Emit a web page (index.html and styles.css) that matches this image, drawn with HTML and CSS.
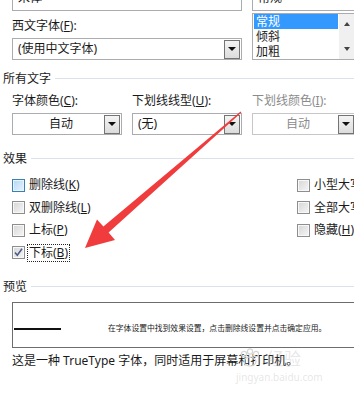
FILE: index.html
```html
<!DOCTYPE html>
<html lang="zh-CN">
<head>
<meta charset="utf-8">
<title>字体</title>
<link rel="stylesheet" href="styles.css">
</head>
<body>
<div class="fontrow">
  <div class="col">
    <div class="box top">宋体</div>
    <div class="label">西文字体(<u>F</u>):</div>
    <div class="box combo"><span>(使用中文字体)</span><span class="dd"><i></i></span></div>
  </div>
  <div class="col">
    <div class="box top">常规</div>
    <div class="listbox">
      <div class="items">
        <div class="item sel">常规</div>
        <div class="item">倾斜</div>
        <div class="item">加粗</div>
      </div>
      <div class="scroll"><i class="up"></i><i class="down"></i></div>
    </div>
  </div>
</div>

<div class="sec sec-all">所有文字</div>
<div class="fields3">
  <div class="label2">字体颜色(<u>C</u>):</div>
  <div class="label2">下划线线型(<u>U</u>):</div>
  <div class="label2 dis">下划线颜色(<u>I</u>):</div>
  <div class="box combo center"><span class="val">自动</span><span class="dd"><i></i></span></div>
  <div class="box combo"><span>(无)</span><span class="dd"><i></i></span></div>
  <div class="box combo center disabled"><span class="val">自动</span><span class="dd"><i></i></span></div>
</div>

<div class="sec sec-fx">效果</div>
<div class="effects">
  <div class="cb"><span class="chk hover"></span><span>删除线(<u>K</u>)</span></div>
  <div class="cb"><span class="chk"></span><span>双删除线(<u>L</u>)</span></div>
  <div class="cb"><span class="chk"></span><span>上标(<u>P</u>)</span></div>
  <div class="cb"><span class="chk"><svg viewBox="0 0 11 11" width="11" height="11"><path d="M2 5.5 L4.3 8.3 L9 1.8" fill="none" stroke="#4a5c88" stroke-width="1.6"/></svg></span><span class="focus">下标(<u>B</u>)</span></div>
  <div class="cb"><span class="chk"></span><span>小型大写字母(<u>M</u>)</span></div>
  <div class="cb"><span class="chk"></span><span>全部大写字母(<u>A</u>)</span></div>
  <div class="cb"><span class="chk"></span><span>隐藏(<u>H</u>)</span></div>
</div>

<div class="sec sec-pv">预览</div>
<div class="preview">
  <span class="pline"></span>
  <span class="ptext">在字体设置中找到效果设置，点击删除线设置并点击确定应用。</span>
</div>
<div class="note">这是一种 TrueType 字体，同时适用于屏幕和打印机。</div>

<div class="watermark">
  <svg class="paw" viewBox="0 0 26 20" width="26" height="20"><g fill="none" stroke="#d6d6d6" stroke-width="1.2"><circle cx="6" cy="6" r="2.6"/><circle cx="12" cy="3.5" r="2.6"/><circle cx="18" cy="6" r="2.6"/><ellipse cx="12" cy="13.5" rx="6" ry="4.5"/></g></svg>
  <span class="wm-big">经验</span>
  <span class="wm-url">jingyan.baidu.com</span>
</div>

<svg class="arrow" viewBox="0 0 354 396" width="354" height="396">
  <polygon points="85,248 97,219.5 103.4,226.6 240.6,111.5 241.4,112.5 108.6,232.6 115,240" fill="#f03c3c"/>
</svg>
</body>
</html>
```

FILE: styles.css
```css
* { box-sizing: border-box; }
html, body { margin: 0; padding: 0; }
body {
  width: 354px;
  height: 396px;
  overflow: hidden;
  position: relative;
  background: #fff;
  font-family: "Noto Sans", "Noto Sans CJK SC", sans-serif;
  font-size: 12px;
  color: #1a1a1a;
}
u { text-decoration: underline; text-underline-offset: 1px; }

.fontrow {
  display: grid;
  grid-template-columns: 230px 104px;
  column-gap: 10px;
  padding-left: 12px;
  margin-top: -11px;
}
.col { display: flex; flex-direction: column; }

.box {
  height: 22px;
  border: 1px solid #aaacb0;
  background: #fff;
  display: flex;
  align-items: center;
  padding-left: 5px;
  line-height: 14px;
  white-space: nowrap;
}
.box.top { align-items: flex-start; padding-top: 1px; }
.combo { padding-right: 1px; }
.combo .dd {
  margin-left: auto;
  width: 16px;
  height: 19px;
  border: 1px solid #747474;
  background: linear-gradient(#f4f4f4, #dcdcdc);
  display: flex;
  align-items: center;
  justify-content: center;
}
.combo .dd i {
  width: 0; height: 0;
  border-left: 4px solid transparent;
  border-right: 4px solid transparent;
  border-top: 4px solid #111;
}
.combo.center .val { flex: 1; text-align: center; }
.combo.disabled { border-color: #c6c6c6; color: #8b8b8b; }

.label {
  height: 27px;
  padding-top: 3px;
  display: flex;
  align-items: center;
  line-height: 14px;
}

.listbox {
  margin-top: 2px;
  height: 47px;
  border: 1px solid #aaacb0;
  display: flex;
}
.items { flex: 1; padding: 0 1px; }
.item { height: 15px; line-height: 15px; padding-left: 2px; }
.item.sel { background: #3399ff; color: #fff; }
.scroll {
  width: 16px;
  background: #f0f0f0;
  display: flex;
  flex-direction: column;
  align-items: center;
  justify-content: space-between;
  padding: 8px 0 8px;
}
.scroll i { width: 0; height: 0; border-left: 3.5px solid transparent; border-right: 3.5px solid transparent; }
.scroll .up { border-bottom: 4px solid #444; }
.scroll .down { border-top: 4px solid #444; }

.sec {
  display: flex;
  align-items: center;
  height: 16px;
  line-height: 16px;
  padding-left: 3px;
  white-space: nowrap;
}
.sec::after {
  content: "";
  flex: 1;
  height: 1px;
  background: #dce2e9;
  margin-left: 4px;
  margin-top: -1px;
}
.sec-all { margin-top: 11px; }
.sec-fx { margin-top: 16px; }
.sec-pv { margin-top: 15px; }

.fields3 {
  display: grid;
  grid-template-columns: 110px 110px 104px;
  grid-template-rows: 16px 22px;
  column-gap: 10px;
  row-gap: 4px;
  padding-left: 12px;
  margin-top: 6px;
}
.label2 { line-height: 16px; white-space: nowrap; }
.label2.dis { color: #8b8b8b; }

.effects {
  display: grid;
  grid-template-rows: repeat(4, 22.5px);
  grid-template-columns: 285px 80px;
  grid-auto-flow: column;
  padding-left: 12px;
  margin-top: 7px;
}
.cb { display: flex; align-items: center; gap: 4px; white-space: nowrap; line-height: 14px; }
.chk {
  width: 13px;
  height: 13px;
  flex: none;
  border: 1px solid #8e8e8e;
  background: linear-gradient(135deg, #d6d6d6, #f6f6f6);
  box-shadow: inset 0 0 0 1px #f8f8f8;
  display: flex;
  align-items: center;
  justify-content: center;
}
.chk.hover {
  border-color: #3c7fb1;
  background: linear-gradient(135deg, #b4d8f4, #e6f3fd);
  box-shadow: inset 0 0 0 1px #e8f3fc;
}
.focus {
  margin-left: -2px;
  padding: 1px 1px 1px 1px;
  border: 1px dotted #222;
}

.preview {
  margin-left: 12px;
  margin-top: 7px;
  width: 360px;
  height: 46px;
  border: 1px solid #6d6d6d;
  display: flex;
  align-items: flex-start;
}
.pline {
  width: 47px;
  height: 2px;
  background: #111;
  margin-left: 1px;
  margin-top: 25px;
}
.ptext {
  margin-left: 47px;
  margin-top: 20px;
  font-size: 7.8px;
  line-height: 10px;
  white-space: nowrap;
  color: #222;
}
.note {
  margin-left: 12px;
  margin-top: 5px;
  line-height: 16px;
  white-space: nowrap;
}

.watermark {
  position: absolute;
  left: 236px;
  top: 345px;
  width: 92px;
  height: 40px;
  pointer-events: none;
}
.paw { position: absolute; left: 2px; top: 3px; }
.wm-big {
  position: absolute;
  left: 31px;
  top: 4px;
  font-size: 17px;
  line-height: 20px;
  color: rgba(170, 170, 170, 0.3);
}
.wm-url {
  position: absolute;
  left: 0;
  top: 26px;
  font-size: 10px;
  line-height: 12px;
  color: rgba(170, 170, 170, 0.3);
}

.arrow {
  position: absolute;
  left: 0;
  top: 0;
  pointer-events: none;
}
```
